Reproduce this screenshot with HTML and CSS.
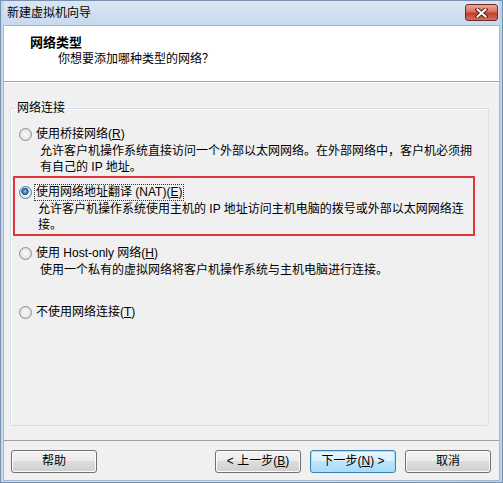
FILE: index.html
```html
<html>
<head>
<meta charset="utf-8">
<link rel="stylesheet" href="styles.css">
</head>
<body>

<div class="window">
    <div class="titlebar">
        <div class="title">新建虚拟机向导</div>
        <div class="close-btn">
            <svg width="13" height="10" viewBox="0 0 13 10">
                <path d="M2.5 1.5 L10.5 8.5 M10.5 1.5 L2.5 8.5" stroke="#5b1f18" stroke-width="4" stroke-linecap="square"/>
                <path d="M2.5 1.5 L10.5 8.5 M10.5 1.5 L2.5 8.5" stroke="#ffffff" stroke-width="2" stroke-linecap="square"/>
            </svg>
        </div>
    </div>

    <div class="client">
        <div class="header">
            <div class="header-title">网络类型</div>
            <div class="header-sub">你想要添加哪种类型的网络？</div>
        </div>

        <div class="main">
            <fieldset class="group">
                <legend>网络连接</legend>

                <div class="option first">
                    <div class="option-row">
                        <span class="radio"></span>
                        <span class="label">使用桥接网络(<u>R</u>)</span>
                    </div>
                    <div class="desc">允许客户机操作系统直接访问一个外部以太网网络。在外部网络中，客户机必须拥</div>
                    <div class="desc">有自己的 IP 地址。</div>
                </div>

                <div class="option highlight">
                    <div class="option-row">
                        <span class="radio on"></span>
                        <span class="label focus">使用网络地址翻译 (NAT)(<u>E</u>)</span>
                    </div>
                    <div class="desc">允许客户机操作系统使用主机的 IP 地址访问主机电脑的拨号或外部以太网网络连</div>
                    <div class="desc">接。</div>
                </div>

                <div class="option third">
                    <div class="option-row">
                        <span class="radio"></span>
                        <span class="label">使用 Host-only 网络(<u>H</u>)</span>
                    </div>
                    <div class="desc">使用一个私有的虚拟网络将客户机操作系统与主机电脑进行连接。</div>
                </div>

                <div class="option fourth">
                    <div class="option-row">
                        <span class="radio"></span>
                        <span class="label">不使用网络连接(<u>T</u>)</span>
                    </div>
                </div>
            </fieldset>
        </div>

        <div class="footer">
            <div class="btn">帮助</div>
            <div class="btn back">&lt; 上一步(<u>B</u>)</div>
            <div class="btn default">下一步(<u>N</u>) &gt;</div>
            <div class="btn">取消</div>
        </div>
    </div>
</div>

</body>
</html>
```

FILE: styles.css
```css
body {
    margin: 0;
    background-color: #ffffff;
    font-family: "Liberation Sans", "Noto Sans CJK SC", sans-serif;
    font-size: 12px;
    color: #000000;
}

.window {
    width: 503px;
    height: 483px;
    box-sizing: border-box;
    border: 1px solid #7990b0;
    padding: 0 3px 2px 3px;
    background: linear-gradient(to right, #c9d8ea, #d4e2f2 60%, #b9d3ee);
    display: flex;
    flex-direction: column;
}

.titlebar {
    height: 25px;
    display: flex;
    align-items: flex-start;
    justify-content: space-between;
    background: linear-gradient(to bottom, #dae6f4, #c7d9ef);
}

.title {
    padding-left: 3px;
    line-height: 25px;
}

.close-btn {
    width: 33px;
    height: 17px;
    margin-top: 3px;
    margin-right: 1px;
    box-sizing: border-box;
    border: 1px solid #6e2b24;
    border-radius: 3px;
    background: linear-gradient(to bottom, #e9a99b, #d9705e 45%, #c2402d 55%, #d2705c);
    display: flex;
    align-items: center;
    justify-content: center;
}

.client {
    flex: 1;
    display: flex;
    flex-direction: column;
    background-color: #f0f0f0;
    box-shadow: 0 0 0 1px #a9b9cd;
}

.header {
    height: 56px;
    box-sizing: border-box;
    padding-top: 9px;
    padding-left: 26px;
    background-color: #ffffff;
    border-bottom: 1px solid #a0a0a0;
}

.header-title {
    font-size: 13px;
    font-weight: bold;
    line-height: 16px;
}

.header-sub {
    padding-left: 28px;
    line-height: 16px;
}

.main {
    flex: 1;
    display: flex;
    flex-direction: column;
    border-top: 1px solid #ffffff;
}

.group {
    flex: 1;
    margin: 17px 10px 14px 6px;
    padding: 0;
    border: 1px solid #d5dfe5;
    border-radius: 2px;
    box-shadow: inset 1px 1px 0 #ffffff;
}

.group legend {
    margin-left: 4px;
    padding: 0 2px;
    line-height: 16px;
}

.option {
    padding-left: 8px;
}

.option.first {
    margin-top: 10px;
}

.option.highlight {
    margin: 1px 13px 0 2px;
    padding: 6px 0 0 4px;
    border: 2px solid #e0373f;
    height: 50px;
}

.option.third {
    margin-top: 9px;
}

.option.fourth {
    margin-top: 26px;
}

.option-row {
    display: flex;
    align-items: center;
    height: 16px;
}

.radio {
    width: 13px;
    height: 13px;
    box-sizing: border-box;
    margin-right: 4px;
    border-radius: 50%;
    border: 1px solid #8d8d8d;
    background: radial-gradient(circle at 50% 50%, #fbfbfb 0, #ececec 45%, #cfcfcf 100%);
}

.radio.on {
    border-color: #5a7fa3;
    background:
        radial-gradient(circle at 45% 40%, #a9d5f5 0, #3a86c6 1.8px, #1f5d95 3.4px, rgba(31, 93, 149, 0) 4px),
        radial-gradient(circle at 50% 50%, #fbfbfb 0, #ececec 45%, #cfcfcf 100%);
}

.label {
    line-height: 15px;
}

.label.focus {
    outline: 1px dotted #333333;
    padding: 0 1px;
    margin-left: -1px;
}

.desc {
    padding-left: 21px;
    line-height: 16px;
}

.option-row + .desc {
    margin-top: 1px;
}

.highlight .desc {
    padding-left: 19px;
}

.footer {
    height: 40px;
    box-sizing: border-box;
    border-top: 1px solid #a0a0a0;
    padding: 9px 8px 0 7px;
    display: flex;
}

.btn {
    width: 86px;
    height: 23px;
    box-sizing: border-box;
    border: 1px solid #707070;
    border-radius: 3px;
    background: linear-gradient(to bottom, #f2f2f2, #ebebeb 50%, #dddddd 50%, #cfcfcf);
    box-shadow: inset 0 0 0 1px #fcfcfc;
    text-align: center;
    line-height: 21px;
}

.btn.back {
    margin-left: auto;
}

.btn.default {
    margin-left: 9px;
    margin-right: 9px;
    border-color: #3c7fb1;
    background: linear-gradient(to bottom, #eaf6fd, #d9f0fc 50%, #bee6fd 50%, #a7d9f5);
    box-shadow: inset 0 0 0 1px #9ee4fb;
}
```
